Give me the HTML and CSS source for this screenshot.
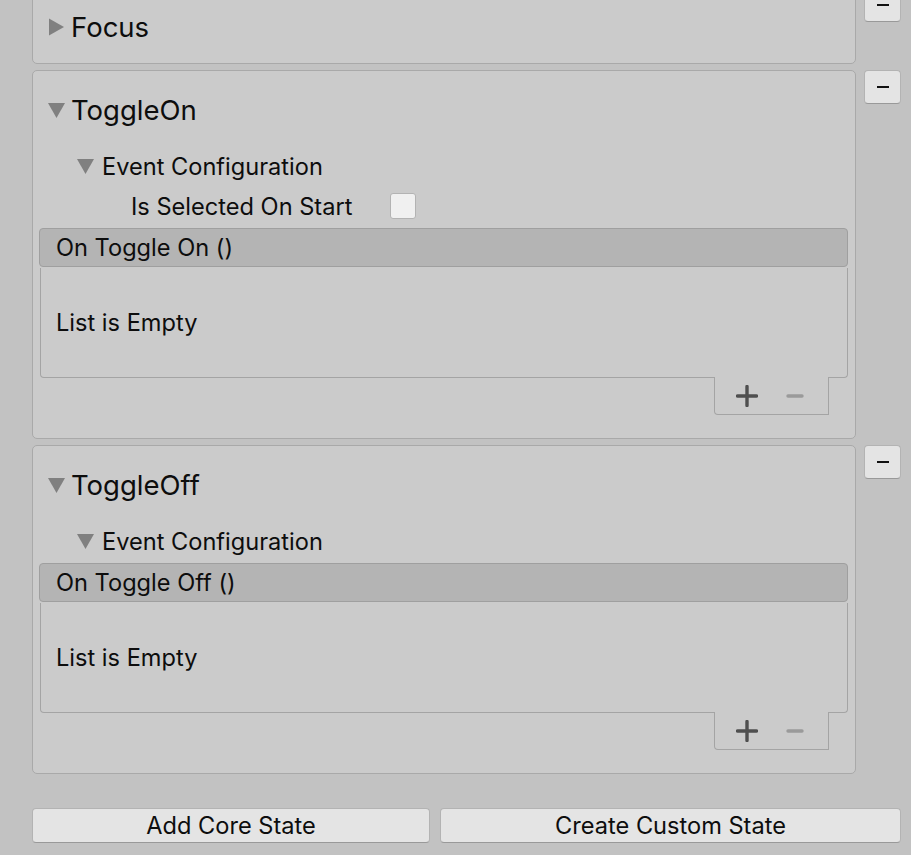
FILE: index.html
```html
<!DOCTYPE html>
<html>
<head>
<meta charset="utf-8">
<link rel="stylesheet" href="styles.css">
</head>
<body>
<div class="states">
  <div class="state-row first">
    <div class="panel">
      <div class="title"><svg class="tri tri-right" width="17" height="18" viewBox="0 0 17 18"><polygon points="1,0.5 16,9 1,17.5" /></svg><span>Focus</span></div>
    </div>
    <button class="remove"><span class="dash"></span></button>
  </div>

  <div class="state-row">
    <div class="panel">
      <div class="title"><svg class="tri" width="17" height="15" viewBox="0 0 17 15"><polygon points="0,0 17,0 8.5,15" /></svg><span>ToggleOn</span></div>
      <div class="sub"><svg class="tri" width="17" height="15" viewBox="0 0 17 15"><polygon points="0,0 17,0 8.5,15" /></svg><span>Event Configuration</span></div>
      <div class="field"><span class="field-label">Is Selected On Start</span><span class="checkbox"></span></div>
      <div class="event">
        <div class="event-head">On Toggle On ()</div>
        <div class="event-body">List is Empty</div>
        <div class="event-foot">
          <svg width="22" height="22" viewBox="0 0 22 22" class="plus"><path d="M11 1.5 V20.5 M1.5 11 H20.5" /></svg>
          <svg width="18" height="22" viewBox="0 0 18 22" class="minus"><path d="M2 11 H16" /></svg>
        </div>
      </div>
    </div>
    <button class="remove"><span class="dash"></span></button>
  </div>

  <div class="state-row">
    <div class="panel">
      <div class="title"><svg class="tri" width="17" height="15" viewBox="0 0 17 15"><polygon points="0,0 17,0 8.5,15" /></svg><span>ToggleOff</span></div>
      <div class="sub"><svg class="tri" width="17" height="15" viewBox="0 0 17 15"><polygon points="0,0 17,0 8.5,15" /></svg><span>Event Configuration</span></div>
      <div class="event">
        <div class="event-head">On Toggle Off ()</div>
        <div class="event-body">List is Empty</div>
        <div class="event-foot">
          <svg width="22" height="22" viewBox="0 0 22 22" class="plus"><path d="M11 1.5 V20.5 M1.5 11 H20.5" /></svg>
          <svg width="18" height="22" viewBox="0 0 18 22" class="minus"><path d="M2 11 H16" /></svg>
        </div>
      </div>
    </div>
    <button class="remove"><span class="dash"></span></button>
  </div>
</div>

<div class="actions">
  <button class="action add">Add Core State</button>
  <button class="action create">Create Custom State</button>
</div>
</body>
</html>
```

FILE: styles.css
```css
html, body {
  margin: 0;
  padding: 0;
}
body {
  background: #c2c2c2;
  font-family: Inter, "Noto Sans", sans-serif;
  color: #0d0d0d;
  font-size: 23.6px;
  width: 911px;
  height: 855px;
  overflow: hidden;
}
.states {
  display: flex;
  flex-direction: column;
  gap: 6px;
  padding: 0 10px 0 32px;
  margin-top: -12px;
}
.state-row {
  display: flex;
  align-items: flex-start;
  gap: 8px;
}
.panel {
  flex: 1;
  background: #cbcbcb;
  border: 1px solid #a9a9a9;
  border-radius: 5px;
  padding: 19px 7px 23px 6px;
}
.first .panel {
  padding-top: 18px;
  padding-bottom: 16px;
}
.title {
  display: flex;
  align-items: center;
  height: 40px;
  font-size: 27.5px;
  padding-left: 9px;
  gap: 6px;
}
.tri {
  flex: none;
}
.tri polygon {
  fill: #808080;
}
.sub {
  display: flex;
  align-items: center;
  height: 40px;
  margin-top: 16px;
  padding-left: 38px;
  gap: 8px;
}
.field {
  display: flex;
  align-items: center;
  height: 40px;
  padding-left: 92px;
}
.field-label {
  width: 259px;
}
.checkbox {
  width: 24px;
  height: 24px;
  background: #f0f0f0;
  border: 1px solid #b3b3b3;
  border-radius: 3px;
}
.event {
  margin-top: 2px;
  display: flex;
  flex-direction: column;
}
.event-head {
  height: 39px;
  box-sizing: border-box;
  background: #b4b4b4;
  border: 1px solid #9f9f9f;
  border-radius: 4px;
  padding-left: 16px;
  display: flex;
  align-items: center;
}
.event-body {
  height: 110px;
  box-sizing: border-box;
  margin: 1px 0 0 1px;
  border: 1px solid #a4a4a4;
  border-top: none;
  border-radius: 0 0 4px 4px;
  padding-left: 15px;
  display: flex;
  align-items: center;
}
.event-foot {
  align-self: flex-end;
  margin: -1px 19px 0 0;
  width: 115px;
  height: 38px;
  box-sizing: border-box;
  background: #cbcbcb;
  border: 1px solid #a4a4a4;
  border-top: none;
  border-radius: 0 0 0 4px;
  display: flex;
  align-items: center;
  padding-left: 21px;
  gap: 28px;
}
.plus path {
  stroke: #4f4f4f;
  stroke-width: 3.4;
  stroke-linecap: round;
  fill: none;
}
.minus path {
  stroke: #9a9a9a;
  stroke-width: 3.4;
  stroke-linecap: round;
  fill: none;
}
.remove {
  width: 37px;
  height: 34px;
  margin: 0;
  padding: 0;
  background: #e4e4e4;
  border: 1px solid #b3b3b3;
  border-bottom-color: #999999;
  border-radius: 4px;
  display: flex;
  align-items: center;
  justify-content: center;
  flex: none;
}
.dash {
  display: block;
  width: 12px;
  height: 2px;
  background: #111;
}
.actions {
  display: flex;
  gap: 10px;
  padding: 0 10px 0 32px;
  margin-top: 34px;
}
.action {
  height: 35px;
  margin: 0;
  padding: 0;
  background: #e4e4e4;
  border: 1px solid #b3b3b3;
  border-bottom-color: #999999;
  border-radius: 4px;
  font-family: Inter, "Noto Sans", sans-serif;
  font-size: 23.6px;
  color: #0d0d0d;
}
.add {
  width: 398px;
}
.create {
  flex: 1;
}
```
